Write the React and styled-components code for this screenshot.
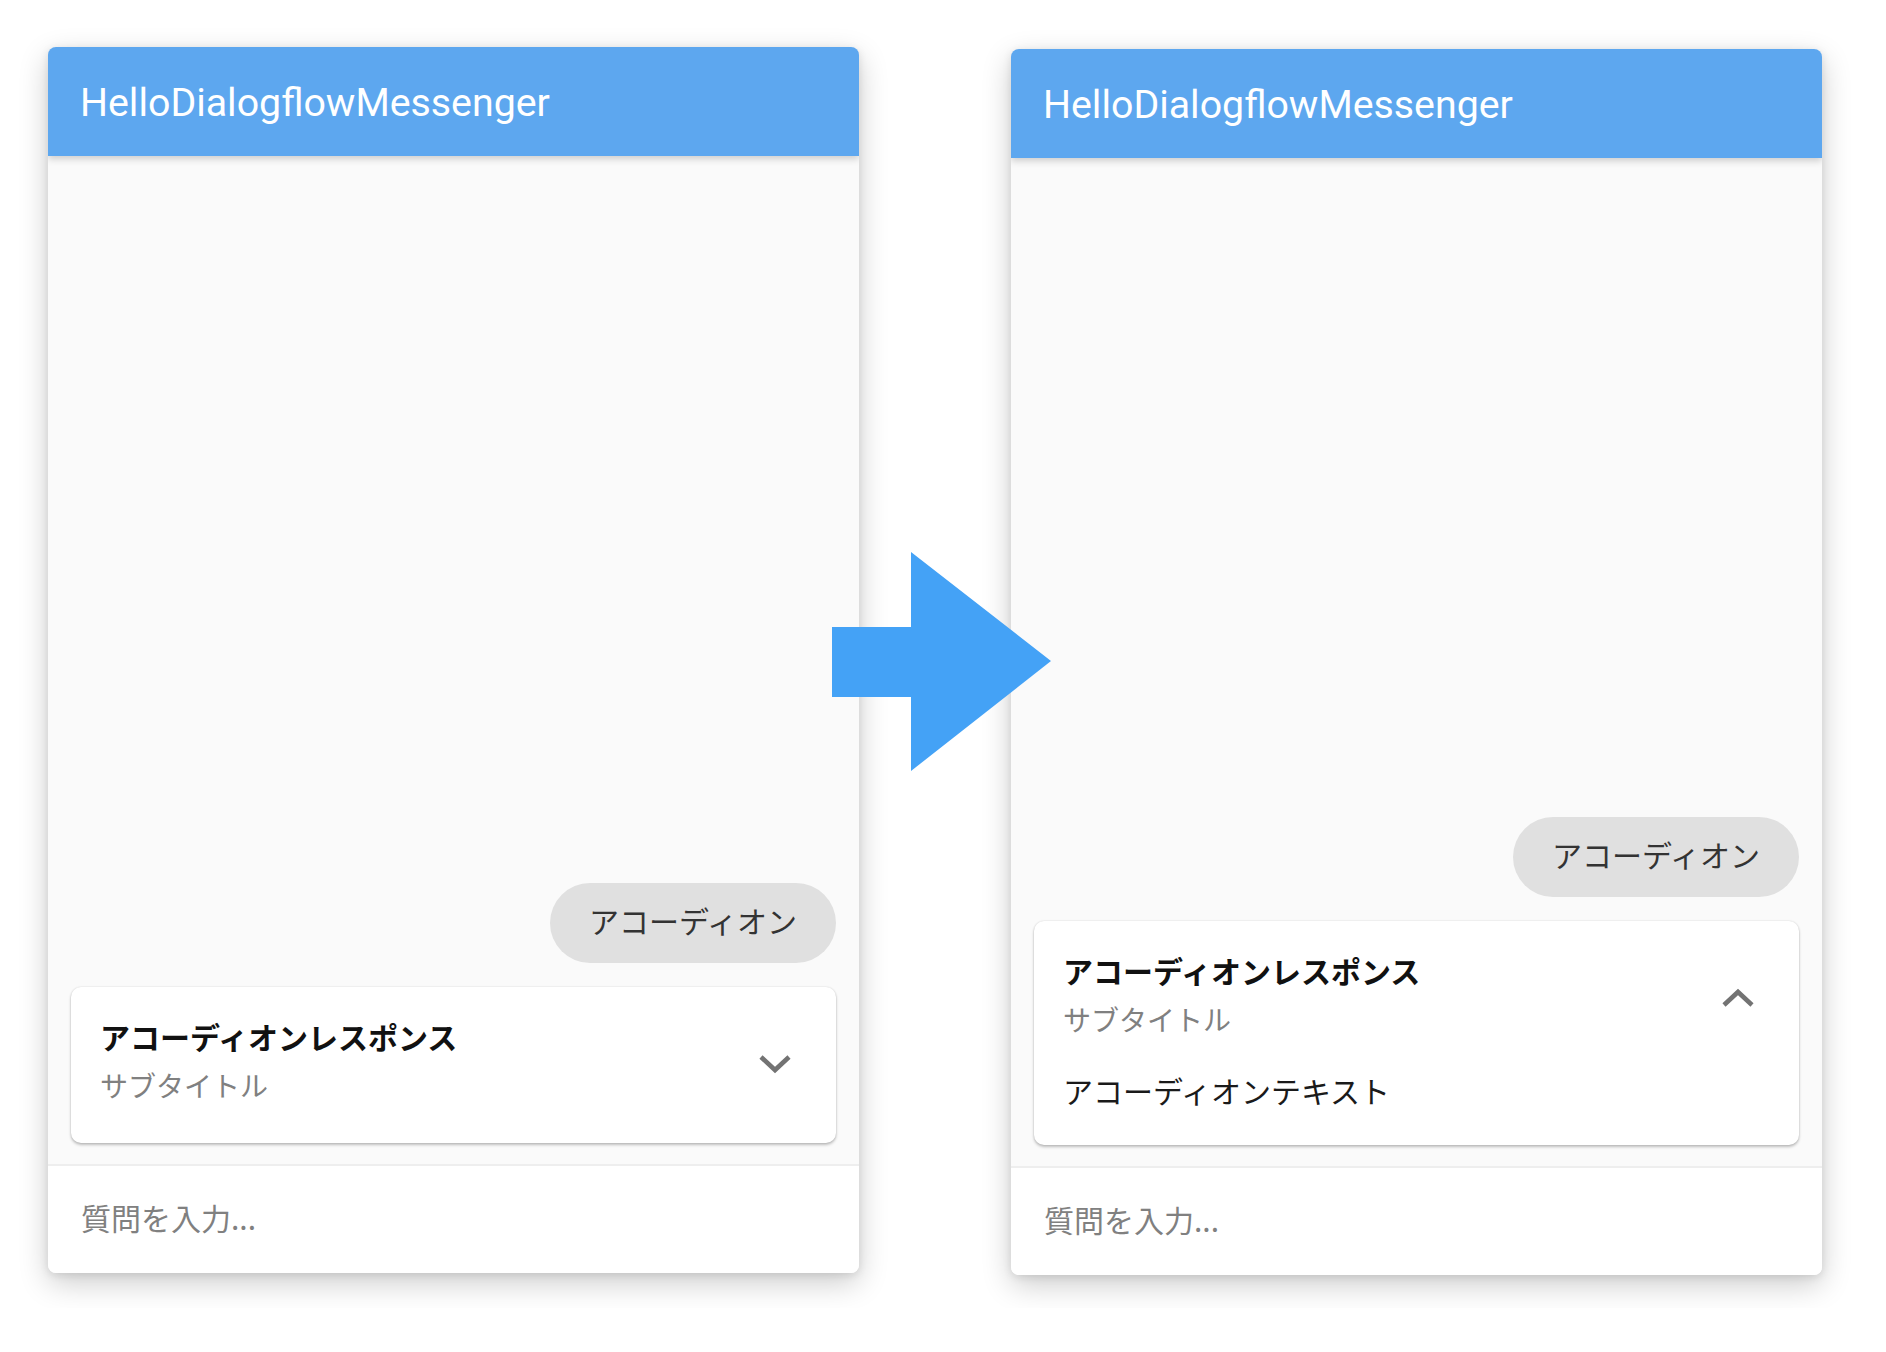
import React from 'react';
import styled, { createGlobalStyle } from 'styled-components';

const GlobalStyle = createGlobalStyle`
  html, body {
    margin: 0;
    padding: 0;
    background: #ffffff;
  }
  body {
    font-family: Roboto, "Noto Sans CJK JP", sans-serif;
  }
`;

const JP = `"Noto Sans CJK JP", "Noto Sans", sans-serif`;

const ChevronIcon = ({ up }) => (
  <Chevron width="34" height="20" viewBox="0 0 34 20" aria-hidden="true">
    <polyline
      points={up ? '3,17 17,4 31,17' : '3,3 17,16 31,3'}
      fill="none"
      stroke="#737373"
      strokeWidth="4.6"
    />
  </Chevron>
);

const Messenger = ({ open, offset }) => (
  <Panel $offset={offset}>
    <TitleBar>
      <TitleText>HelloDialogflowMessenger</TitleText>
    </TitleBar>
    <MessageList>
      <UserBubble>アコーディオン</UserBubble>
      <Accordion>
        <AccordionHeader>
          <HeaderTexts>
            <AccordionTitle>アコーディオンレスポンス</AccordionTitle>
            <AccordionSubtitle>サブタイトル</AccordionSubtitle>
          </HeaderTexts>
          <ChevronIcon up={open} />
        </AccordionHeader>
        {open && <AccordionBody>アコーディオンテキスト</AccordionBody>}
      </Accordion>
    </MessageList>
    <InputBar>
      <Placeholder>質問を入力...</Placeholder>
    </InputBar>
  </Panel>
);

const App = () => (
  <>
    <GlobalStyle />
    <Stage>
      <Messenger open={false} offset={0} />
      <Messenger open offset={2} />
      <Arrow width="219" height="219" viewBox="0 0 219 219" aria-hidden="true">
        <polygon points="0,75 79,75 79,0 219,109 79,219 79,145 0,145" fill="#44a2f6" />
      </Arrow>
    </Stage>
  </>
);

/* styled-components */
const Stage = styled.div`
  position: relative;
  display: flex;
  align-items: flex-start;
  gap: 152px;
  height: 1308px;
  box-sizing: border-box;
  padding: 47px 0 0 48px;
  overflow: hidden;
`;

const Panel = styled.div`
  width: 811px;
  height: 1226px;
  margin-top: ${(p) => p.$offset}px;
  display: flex;
  flex-direction: column;
  border-radius: 8px;
  background: #fafafa;
  box-shadow: 0 10px 30px rgba(0, 0, 0, 0.2), 0 2px 8px rgba(0, 0, 0, 0.1);
  overflow: hidden;
`;

const TitleBar = styled.div`
  position: relative;
  z-index: 1;
  height: 109px;
  flex-shrink: 0;
  display: flex;
  align-items: center;
  padding: 3px 0 0 32px;
  box-sizing: border-box;
  background: #5da7ef;
  box-shadow: 0 3px 7px rgba(0, 0, 0, 0.18);
`;

const TitleText = styled.div`
  font-family: Roboto, sans-serif;
  font-size: 39.3px;
  font-weight: 400;
  color: #ffffff;
`;

const MessageList = styled.div`
  flex: 1;
  display: flex;
  flex-direction: column;
  justify-content: flex-end;
  align-items: flex-end;
  gap: 24px;
  padding: 0 23px 21px 23px;
  background: #fafafa;
`;

const UserBubble = styled.div`
  height: 80px;
  box-sizing: border-box;
  display: flex;
  align-items: center;
  padding: 0 39px 7px 39px;
  border-radius: 40px;
  background: #e0e0e0;
  font-family: ${JP};
  font-size: 30px;
  color: #333333;
`;

const Accordion = styled.div`
  align-self: stretch;
  background: #ffffff;
  border-radius: 10px;
  box-shadow: 0 2px 3px rgba(0, 0, 0, 0.24), 0 0 2px rgba(0, 0, 0, 0.14);
`;

const AccordionHeader = styled.div`
  display: flex;
  align-items: center;
  justify-content: space-between;
  padding: 29px 44px 40px 29px;
`;

const HeaderTexts = styled.div`
  display: flex;
  flex-direction: column;
`;

const AccordionTitle = styled.div`
  font-family: ${JP};
  font-size: 30px;
  line-height: 40px;
  font-weight: 700;
  color: #111111;
`;

const AccordionSubtitle = styled.div`
  margin-top: 11px;
  font-family: ${JP};
  font-size: 28px;
  line-height: 36px;
  color: #808080;
`;

const Chevron = styled.svg`
  display: block;
  flex-shrink: 0;
  margin-top: 8px;
`;

const AccordionBody = styled.div`
  padding: 0 29px 40px 29px;
  margin-top: -2px;
  font-family: ${JP};
  font-size: 30px;
  line-height: 30px;
  color: #1a1a1a;
`;

const InputBar = styled.div`
  height: 109px;
  flex-shrink: 0;
  box-sizing: border-box;
  display: flex;
  align-items: center;
  padding: 0 0 5px 33px;
  background: #ffffff;
  border-top: 2px solid #eeeeee;
`;

const Placeholder = styled.div`
  font-family: ${JP};
  font-size: 30px;
  color: #808080;
`;

const Arrow = styled.svg`
  position: absolute;
  left: 832px;
  top: 552px;
  z-index: 2;
`;

export default App;
